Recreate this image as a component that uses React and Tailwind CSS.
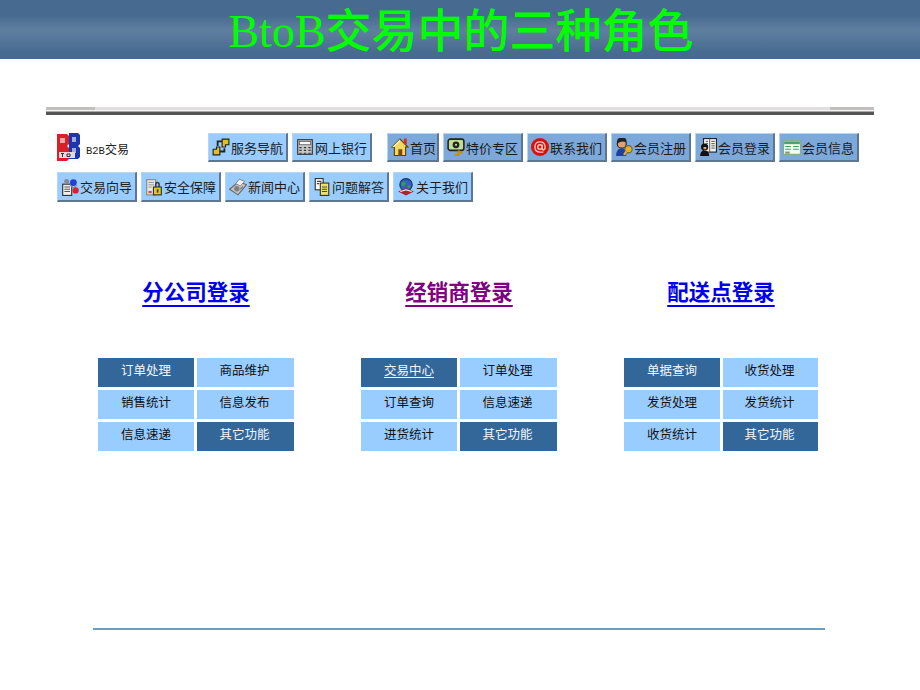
import React from "react";

const cjk = "font-['Noto_Sans_CJK_SC','Noto_Sans',sans-serif]";

// 16x16 toolbar icons, roughly the old gif pictures
const icons = {
  service: (
    <>
      <path d="M9 1h6v5h-3v2H9z" fill="#e0c020" stroke="#222" />
      <path d="M1 10h3V8h3v7H1z" fill="#e0c020" stroke="#222" />
      <path d="M5 7 L5 3 H9 M11 9 V12 H7" stroke="#222" strokeWidth="1.6" fill="none" />
    </>
  ),
  bank: (
    <>
      <rect x="1.5" y="1.5" width="13" height="13" fill="#c8c8c8" stroke="#333" />
      <rect x="3" y="3" width="10" height="3" fill="#fff" stroke="#555" strokeWidth="0.7" />
      <path d="M3 8h2v1H3zM7 8h2v1H7zM11 8h2v1h-2zM3 10.5h2v1H3zM7 10.5h2v1H7zM11 10.5h2v1h-2zM3 13h2v1H3zM7 13h2v1H7zM11 13h2v1h-2z" fill="#333" />
    </>
  ),
  home: (
    <>
      <path d="M8 1 L15 8 H13 V15.5 H3 V8 H1 Z" fill="#f4d860" stroke="#5a4010" />
      <rect x="11.5" y="0.5" width="2.5" height="5" fill="#d83020" />
      <path d="M8 1 L1 8 H3 L8 3 Z" fill="#fff4b0" />
      <rect x="6.5" y="10" width="3.5" height="5.5" fill="#7a4a10" />
    </>
  ),
  price: (
    <>
      <rect x="1" y="1" width="14" height="10" rx="2" fill="#c0dc98" stroke="#222" strokeWidth="1.4" />
      <circle cx="8" cy="6" r="3" fill="#222" />
      <circle cx="8" cy="6" r="1" fill="#c0dc98" />
      <path d="M10.5 11 V15 H6.5 M10.5 13 H14" stroke="#b89810" strokeWidth="2" fill="none" />
    </>
  ),
  contact: (
    <>
      <circle cx="8" cy="8" r="8" fill="#d81010" />
      <circle cx="8" cy="8" r="2" fill="none" stroke="#ffc8b8" strokeWidth="1.3" />
      <path d="M10 6 V9.5 Q10 11 11.5 10.5 Q13 9.5 12.5 7 Q11.5 3.5 8 3.5 Q3.5 3.5 3.5 8 Q3.5 12.5 8 12.5 H11" fill="none" stroke="#ffc8b8" strokeWidth="1.2" />
    </>
  ),
  register: (
    <>
      <circle cx="6" cy="5" r="4" fill="#e0a070" stroke="#222" />
      <path d="M2 5 Q1 -1 6 0 Q11 -1 10 4 Q6 2 2 5 Z" fill="#222" />
      <path d="M1 16 Q1 9 6 9 Q11 9 10 16 Z" fill="#2040a0" />
      <circle cx="12" cy="10" r="3.2" fill="#e8b020" stroke="#664" />
      <path d="M10 12 L8 15" stroke="#e8b020" strokeWidth="2" />
    </>
  ),
  login: (
    <>
      <rect x="4" y="0.5" width="11.5" height="12" fill="#f4f4e8" stroke="#223" />
      <path d="M9.5 1V12M6 3h2M6 5h2M11 3h3M11 5h3M11 7h3M11 9h3" stroke="#445" strokeWidth="0.8" />
      <circle cx="5" cy="8" r="3.2" fill="#111" />
      <path d="M1 16 Q1 11 5 11 Q9 11 9 16 Z" fill="#111" />
      <rect x="4" y="8" width="2.5" height="2" fill="#e0a070" />
    </>
  ),
  info: (
    <>
      <rect x="0.5" y="2.5" width="15" height="12" fill="#f4fff0" stroke="#8aa890" />
      <rect x="1" y="3" width="14" height="2.5" fill="#50a070" />
      <path d="M2 7.5h5M9 7.5h5M2 10h5M9 10h5" stroke="#40a060" />
      <rect x="2" y="12" width="4" height="2" fill="#8a9a70" />
    </>
  ),
  guide: (
    <>
      <rect x="1.5" y="5.5" width="8" height="10" fill="#f0f0f0" stroke="#333" />
      <path d="M3 8h5M3 10h5M3 12h5" stroke="#555" />
      <circle cx="11" cy="4" r="3" fill="#2040d0" />
      <circle cx="13" cy="11" r="2.8" fill="#d82030" />
      <circle cx="5" cy="3" r="2.2" fill="#889" />
      <path d="M8 6 L11 9 L14 6" stroke="#889" fill="none" />
    </>
  ),
  safe: (
    <>
      <rect x="1.5" y="1.5" width="8" height="13.5" fill="#e8e8e0" stroke="#888" />
      <path d="M3 4h5M3 6h5M3 8h3" stroke="#999" />
      <rect x="3" y="11.5" width="3" height="2" fill="#d05050" />
      <rect x="7.5" y="8" width="7" height="7" fill="#e0c820" stroke="#333" />
      <path d="M9.5 8V5.5 a1.5 1.5 0 0 1 3 0 V8" fill="none" stroke="#333" strokeWidth="1.3" />
      <rect x="10.5" y="10" width="1.4" height="3" fill="#333" />
    </>
  ),
  news: (
    <>
      <path d="M0.5 10 L9 3 L15.5 6 L8 15 Z" fill="#c4c4c4" stroke="#666" />
      <path d="M9 1 L14 3 L10 7 L6 5 Z" fill="#f0f0f0" stroke="#777" strokeWidth="0.7" />
      <circle cx="7" cy="9.5" r="2.4" fill="#808080" />
      <path d="M10 10 L12.5 7.5" stroke="#777" />
    </>
  ),
  question: (
    <>
      <rect x="2" y="0.5" width="7" height="10" fill="#fff" stroke="#333" />
      <rect x="6.5" y="4.5" width="7.5" height="11" fill="#f0e068" stroke="#333" />
      <path d="M3.5 3h4M3.5 5h2M8 8h4.5M8 10h4.5M8 12h4.5" stroke="#444" />
    </>
  ),
  about: (
    <>
      <circle cx="8" cy="6" r="5.5" fill="#3060c0" stroke="#203060" />
      <path d="M4 4 Q7 2 8 5 Q6 8 4 7 Z M9 7 L12 6 L11 10 Z" fill="#30a050" />
      <path d="M1 12 L8 9 L15 12 L8 15.5 Z" fill="#b02030" />
      <path d="M3 12 L8 10.5 L13 12" stroke="#fff" fill="none" />
    </>
  ),
};

const ToolButton = ({ icon, label, dark, narrow, short }) => (
  <button
    className={`flex ${short ? "h-[29px]" : "h-[30px]"} ${narrow ? "w-[52px]" : "w-[80px]"} shrink-0 items-center gap-[1px] border-t border-l border-t-[#b8d4f0] border-l-[#b8d4f0] border-r-2 border-b-2 border-r-[#5f7690] border-b-[#5f7690] pl-[3px] text-[13px] leading-none text-[#1c1c1c] ${
      dark ? "bg-[#7ca8da]" : "bg-[#99ccff]"
    }`}
  >
    <svg width="18" height="18" viewBox="0 0 16 16" className="shrink-0">
      {icons[icon]}
    </svg>
    <span className="whitespace-nowrap">{label}</span>
  </button>
);

const LoginColumn = ({ title, visited, width, cells }) => (
  <div className={`flex ${width} flex-col items-center`}>
    <a
      href="#"
      className={`text-[21.5px] font-bold leading-[30px] underline underline-offset-[5px] ${
        visited ? "text-[#800080]" : "text-[#0000ee]"
      }`}
    >
      {title}
    </a>
    <div className="mt-[52px] grid w-full grid-cols-[96px_1fr] gap-x-[3px] gap-y-[3px]">
      {cells.map((cell) => (
        <div
          key={cell.text}
          className={`flex h-[29px] items-center justify-center pb-[4px] text-[12.5px] even:pr-[2px] ${
            cell.dark ? "bg-[#336699] text-[#f2f6fb]" : "bg-[#99ccff] text-[#111]"
          } ${cell.link ? "underline underline-offset-2" : ""}`}
        >
          {cell.text}
        </div>
      ))}
    </div>
  </div>
);

const App = () => {
  return (
    <div className={`h-[690px] w-[920px] overflow-hidden bg-white ${cjk}`}>
      {/* Title band */}
      <div className="flex h-[59px] items-center justify-center bg-[linear-gradient(180deg,#466a90_0%,#466a90_25%,#5f7f9f_52%,#466a90_90%,#466a90_100%)]">
        <h1 className="pl-[2px] text-[46px] font-medium leading-[50px] text-[#00ff00]">
          <span className="font-['Liberation_Serif',serif] font-normal">BtoB</span>
          交易中的三种角色
        </h1>
      </div>

      {/* Rule */}
      <div className="ml-[46px] mt-[48px] flex h-[8px] w-[828px] flex-col">
        <div className="flex h-[3px]">
          <div className="w-[49px] bg-[#c2bebe]" />
          <div className="flex-1 bg-[#e0dede]" />
          <div className="w-[44px] bg-[#c2bebe]" />
        </div>
        <div className="h-[1px] bg-[#f4f4f4]" />
        <div className="h-[1px] bg-[#a8a8a8]" />
        <div className="h-[3px] bg-[#555]" />
      </div>

      {/* Nav */}
      <div className="ml-[57px] mt-[18px] flex h-[29px] items-start">
        <div className="flex h-[29px] w-[151px] items-center gap-[6px]">
          <svg width="23" height="29" viewBox="0 0 23 29">
            <path d="M0 1h10l2 2v8l-2 2 2 2v11l-2 2H0z" fill="#d82028" />
            <path d="M12 0h9l2 2v9l-2 2 2 2v9l-2 2h-9z" fill="#1c34b0" />
            <path d="M3 5h5v5H3z" fill="#f0a8a8" />
            <path d="M15 4h4v5h-4zM15 15h4v5h-4z" fill="#9cacdc" />
            <rect x="2" y="19" width="16" height="6" fill="#e8d8d8" />
            <path d="M4 20.5h3M5.5 20.5V24M10 21h3v2.5h-3z" stroke="#333" fill="none" />
          </svg>
          <span className="pt-[4px] text-[12px] leading-none text-[#222]">
            <span className="font-['Liberation_Mono',monospace] text-[10.5px]">B2B</span>交易
          </span>
        </div>
        <div className="flex items-start gap-[4px]">
          <ToolButton short icon="service" label="服务导航" />
          <ToolButton short icon="bank" label="网上银行" />
          <div className="w-[7px]" />
          <ToolButton short narrow dark icon="home" label="首页" />
          <ToolButton short dark icon="price" label="特价专区" />
          <ToolButton short dark icon="contact" label="联系我们" />
          <ToolButton short dark icon="register" label="会员注册" />
          <ToolButton short dark icon="login" label="会员登录" />
          <ToolButton short dark icon="info" label="会员信息" />
        </div>
      </div>
      <div className="ml-[57px] mt-[10px] flex gap-[4px]">
        <ToolButton icon="guide" label="交易向导" />
        <ToolButton icon="safe" label="安全保障" />
        <ToolButton icon="news" label="新闻中心" />
        <ToolButton icon="question" label="问题解答" />
        <ToolButton icon="about" label="关于我们" />
      </div>

      {/* Login columns */}
      <div className="ml-[98px] mt-[74px] flex gap-[67px]">
        <LoginColumn
          title="分公司登录"
          width="w-[196px]"
          cells={[
            { text: "订单处理", dark: true },
            { text: "商品维护" },
            { text: "销售统计" },
            { text: "信息发布" },
            { text: "信息速递" },
            { text: "其它功能", dark: true },
          ]}
        />
        <LoginColumn
          title="经销商登录"
          visited
          width="w-[196px]"
          cells={[
            { text: "交易中心", dark: true, link: true },
            { text: "订单处理" },
            { text: "订单查询" },
            { text: "信息速递" },
            { text: "进货统计" },
            { text: "其它功能", dark: true },
          ]}
        />
        <LoginColumn
          title="配送点登录"
          width="w-[194px]"
          cells={[
            { text: "单据查询", dark: true },
            { text: "收货处理" },
            { text: "发货处理" },
            { text: "发货统计" },
            { text: "收货统计" },
            { text: "其它功能", dark: true },
          ]}
        />
      </div>

      {/* Footer rule */}
      <div className="ml-[93px] mt-[177px] h-[2px] w-[732px] bg-[#6a9fc4]" />
    </div>
  );
};

export default App;
